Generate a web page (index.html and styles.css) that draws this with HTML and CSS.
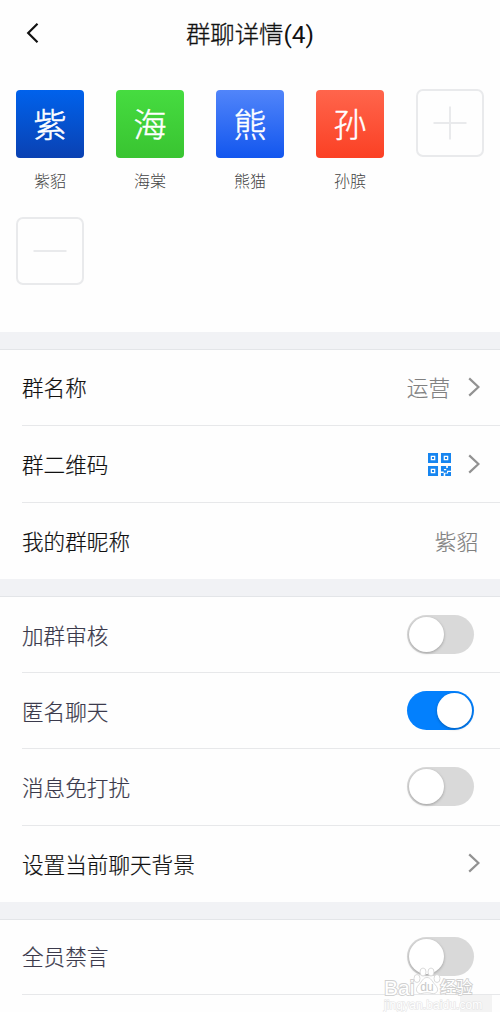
FILE: index.html
```html
<!DOCTYPE html>
<html lang="zh-CN">
<head>
<meta charset="utf-8">
<title>群聊详情</title>
<link rel="stylesheet" href="styles.css">
</head>
<body>
<div class="screen">
  <header class="topbar">
    <svg class="back" viewBox="0 0 16 24"><path d="M12.500 2.800 3.200 12l9.300 9.200"/></svg>
    <h1 class="title">群聊详情<span class="count">(4)</span></h1>
  </header>
  <section class="members">
    <div class="member"><div class="avatar navy">紫</div><span class="name">紫貂</span></div>
    <div class="member"><div class="avatar green">海</div><span class="name">海棠</span></div>
    <div class="member"><div class="avatar blue">熊</div><span class="name">熊猫</span></div>
    <div class="member"><div class="avatar red">孙</div><span class="name">孙膑</span></div>
    <div class="member"><svg class="action" viewBox="0 0 68 68"><rect x="1" y="1" width="66" height="66" rx="6"/><path d="M17.500 34h33M34 17.500v33"/></svg></div>
    <div class="member"><svg class="action" viewBox="0 0 68 68"><rect x="1" y="1" width="66" height="66" rx="6"/><path d="M17.500 34h33"/></svg></div>
  </section>
  <section class="group">
    <div class="row"><span class="label">群名称</span><span class="value">运营</span><svg class="chevron" viewBox="0 0 12 20"><path d="m1.200 1.400 9.200 8.600-9.200 8.600"/></svg></div>
    <div class="row"><span class="label">群二维码</span>
      <svg class="qr" viewBox="0 0 22 22"><path class="frame" d="M1.300 1.300h7v7h-7zM13.700 1.300h7v7h-7zM1.300 13.700h7v7h-7z"/><path class="dots" d="M3.800 3.800h2v2h-2zM16.200 3.800h2v2h-2zM3.800 16.200h2v2h-2zM12.400 12.400h5v2.800h-2.200v2.600h-2.800zM19 12.400h3v4.500h-4.500v-2.500H19zM15 16.500h3.200V19H15zM12.400 19.200H15V22h-2.600zM19.200 18.200H22V22h-5.500v-2.500h2.700z"/></svg>
      <svg class="chevron" viewBox="0 0 12 20"><path d="m1.200 1.400 9.200 8.600-9.200 8.600"/></svg></div>
    <div class="row"><span class="label">我的群昵称</span><span class="value last">紫貂</span></div>
  </section>
  <section class="group settings">
    <div class="row"><span class="label soft">加群审核</span><span class="switch"></span></div>
    <div class="row"><span class="label soft">匿名聊天</span><span class="switch on"></span></div>
    <div class="row"><span class="label soft">消息免打扰</span><span class="switch"></span></div>
    <div class="row"><span class="label">设置当前聊天背景</span><svg class="chevron" viewBox="0 0 12 20"><path d="m1.200 1.400 9.200 8.600-9.200 8.600"/></svg></div>
  </section>
  <section class="group final">
    <div class="row"><span class="label soft">全员禁言</span><span class="switch"></span></div>
  </section>
  <div class="watermark">
    <div class="patch"></div>
    <div class="brand"><span>Bai</span><svg class="paw" viewBox="0 0 28 28"><ellipse cx="4" cy="11" rx="3" ry="4"/><ellipse cx="10" cy="4.500" rx="3" ry="4"/><ellipse cx="18" cy="4.500" rx="3" ry="4"/><ellipse cx="24" cy="11" rx="3" ry="4"/><path d="M14 10c4 0 5 4 8 7 5 5 2 10-3 9-3-1-7-1-10 0-5 1-8-4-3-9 3-3 4-7 8-7z"/><text x="14" y="23" text-anchor="middle">du</text></svg><span class="cn">经验</span></div>
    <div class="url">jingyan.baidu.com</div>
  </div>
</div>
</body>
</html>
```
FILE: styles.css
```css
* { box-sizing: border-box; }
body { margin: 0; background: #fff; font-family: "Noto Sans CJK SC", sans-serif; font-weight: 300; }
.screen { position: relative; width: 500px; height: 1012px; overflow: hidden; background: #fefefe; }
svg { display: block; fill: none; flex: none; }

.topbar { display: grid; grid-template-columns: 60px 1fr 60px; align-items: center; height: 68px; }
.back { width: 16px; height: 24px; margin: -2px 0 0 25px; stroke: #111; stroke-width: 2.2; }
.title { margin: -1px 0 0; text-align: center; font-size: 24.4px; font-weight: 300; line-height: 36px; color: #111; -webkit-text-stroke: .3px #111; }
.count { font-family: Roboto, sans-serif; font-weight: 400; -webkit-text-stroke: 0; }

.members { display: grid; grid-template-columns: repeat(5, 100px); grid-auto-rows: 128px; height: 264px; padding-top: 22px; }
.member { display: flex; flex-direction: column; align-items: center; }
.avatar { width: 68px; height: 68px; border-radius: 4px; color: #fff; font-size: 33px; line-height: 66px; text-align: center; -webkit-text-stroke: .5px #fff; }
.navy { background: linear-gradient(#0062ec, #0a41b2); }
.green { background: linear-gradient(#46dc40, #39c431); }
.blue { background: linear-gradient(#5185fa, #1256ee); }
.red { background: linear-gradient(#ff654c, #fb4024); }
.name { margin-top: 10px; font-size: 16px; line-height: 24px; color: #444; }
.action { width: 68px; height: 68px; stroke: #e9eaec; stroke-width: 2; margin-top: -1px; }

.group { border-top: 17px solid #f1f2f5; box-shadow: inset 0 1px #e3e5e8; }
.row { display: flex; align-items: center; height: 77px; margin-left: 22px; padding-right: 20px; border-bottom: 1px solid #e7e8ea; }
.group:not(.final) .row:last-child { height: 76px; border-bottom: 0; }
.group.settings .row { height: 76.3px; }
.group.settings .row:first-child { height: 77px; padding-top: 1px; }
.label { flex: 1; font-size: 21.6px; line-height: 32px; color: #111; -webkit-text-stroke: .2px; }
.soft { color: #3b3a4c; }
.value { font-size: 21.6px; line-height: 32px; color: #808080; -webkit-text-stroke: .15px; }
.last { margin-right: 2px; }
.chevron { width: 12px; height: 20px; margin-left: 18px; stroke: #929292; stroke-width: 2.2; margin-top: -1px; }
.qr { width: 23px; height: 23px; }
.qr + .chevron { margin-left: 17px; }
.frame { stroke: #1685f0; stroke-width: 2.6; }
.dots { fill: #1685f0; }
.group.final .row { height: 76px; }

.switch { display: flex; width: 67px; height: 39px; padding: 2px; margin-right: 6px; border-radius: 20px; background: #d9d9d9; }
.switch::before { content: ""; width: 35px; height: 35px; border-radius: 50%; background: #fff; box-shadow: 0 1px 3px rgba(0,0,0,.28); }
.switch.on { justify-content: flex-end; background: #0380fd; }

.watermark { position: absolute; left: 384px; top: 967px; width: 116px; height: 45px; color: #fff; font-family: "Liberation Sans", "Noto Sans CJK SC", sans-serif; }
.patch { position: absolute; left: 76px; top: 28px; width: 32px; height: 17px; background: #f3f3f3; }
.brand { position: relative; display: flex; align-items: flex-start; height: 29px; font-size: 21px; font-weight: 400; }
.brand span { padding-top: 11px; line-height: 20px; -webkit-text-stroke: 1.8px #d0d0d0; paint-order: stroke fill; }
.paw { width: 28px; height: 29px; margin: 0 -1px 0 -1px; fill: #fff; stroke: #d2d2d2; stroke-width: .8; }
.paw text { fill: #c8c8c8; stroke: none; font-size: 12px; }
.brand .cn { font-size: 16px; }
.url { position: relative; margin-top: 2px; font-size: 12px; line-height: 14px; letter-spacing: .1px; -webkit-text-stroke: 1.2px #e4e4e4; paint-order: stroke fill; }
```
